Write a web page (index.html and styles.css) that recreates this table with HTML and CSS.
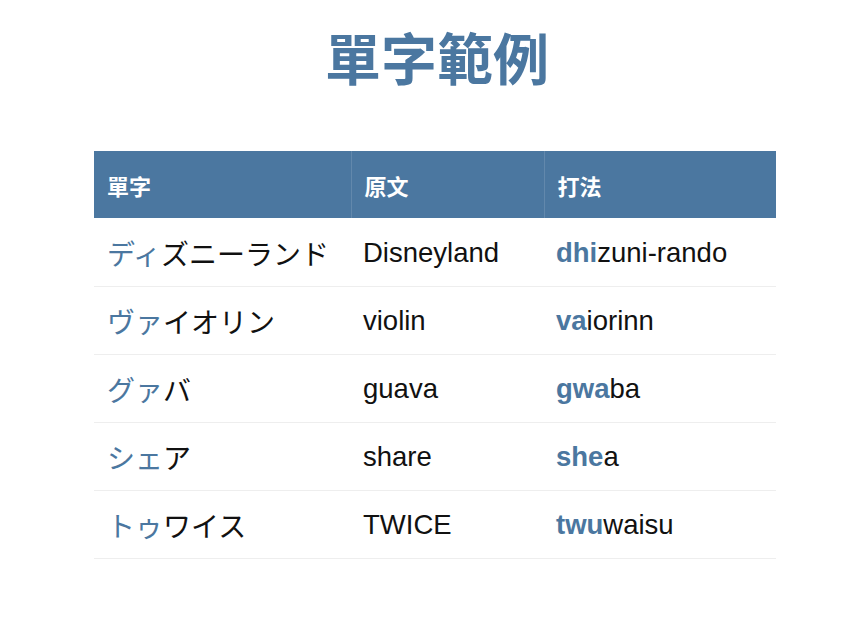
FILE: index.html
```html
<!DOCTYPE html>
<html lang="zh-Hant">
<head>
<meta charset="utf-8">
<link rel="stylesheet" href="styles.css">
</head>
<body>
<main class="page">
  <h1 class="title">單字範例</h1>
  <table class="words">
    <colgroup><col class="c1"><col class="c2"><col class="c3"></colgroup>
    <thead>
      <tr><th>單字</th><th>原文</th><th>打法</th></tr>
    </thead>
    <tbody>
      <tr><td class="kana" lang="ja"><span class="hl">ディ</span>ズニーランド</td><td>Disneyland</td><td><b class="hl">dhi</b>zuni-rando</td></tr>
      <tr><td class="kana" lang="ja"><span class="hl">ヴァ</span>イオリン</td><td>violin</td><td><b class="hl">va</b>iorinn</td></tr>
      <tr><td class="kana" lang="ja"><span class="hl">グァ</span>バ</td><td>guava</td><td><b class="hl">gwa</b>ba</td></tr>
      <tr><td class="kana" lang="ja"><span class="hl">シェ</span>ア</td><td>share</td><td><b class="hl">she</b>a</td></tr>
      <tr><td class="kana" lang="ja"><span class="hl">トゥ</span>ワイス</td><td>TWICE</td><td><b class="hl">twu</b>waisu</td></tr>
    </tbody>
  </table>
</main>
</body>
</html>
```
FILE: styles.css
```css
html, body {
  margin: 0;
  padding: 0;
  background: #ffffff;
}
body {
  font-family: "Liberation Sans", "Noto Sans CJK TC", sans-serif;
  color: #111111;
}
.page {
  width: 867px;
  display: flex;
  flex-direction: column;
  align-items: center;
  padding-top: 20px;
}
.title {
  margin: 0 0 0 7px;
  font-family: "Noto Sans CJK TC", sans-serif;
  font-weight: 700;
  font-size: 56px;
  line-height: 72px;
  color: #4b77a0;
}
.words {
  margin-top: 59px;
  margin-left: 3px;
  width: 682px;
  border-collapse: collapse;
  table-layout: fixed;
}
.c1 { width: 257px; }
.c2 { width: 193px; }
.c3 { width: 232px; }
.words th {
  background: #4b77a0;
  color: #ffffff;
  font-family: "Noto Sans CJK TC", sans-serif;
  font-weight: 700;
  font-size: 22px;
  line-height: 30px;
  text-align: left;
  height: 67px;
  box-sizing: border-box;
  padding: 0 0 0 13px;
  border-left: 1px solid #6288ac;
}
.words th:first-child { border-left: none; }
.words td {
  height: 68px;
  box-sizing: border-box;
  padding: 2px 0 0 12px;
  font-size: 27.5px;
  line-height: 34px;
  border-bottom: 1px solid #eeeeee;
  vertical-align: middle;
  white-space: nowrap;
}
.words td.kana {
  font-family: "Noto Sans CJK JP", sans-serif;
  padding-left: 13px;
  font-size: 28px;
}
.hl {
  color: #4b77a0;
}
b.hl { font-weight: 700; }
```
